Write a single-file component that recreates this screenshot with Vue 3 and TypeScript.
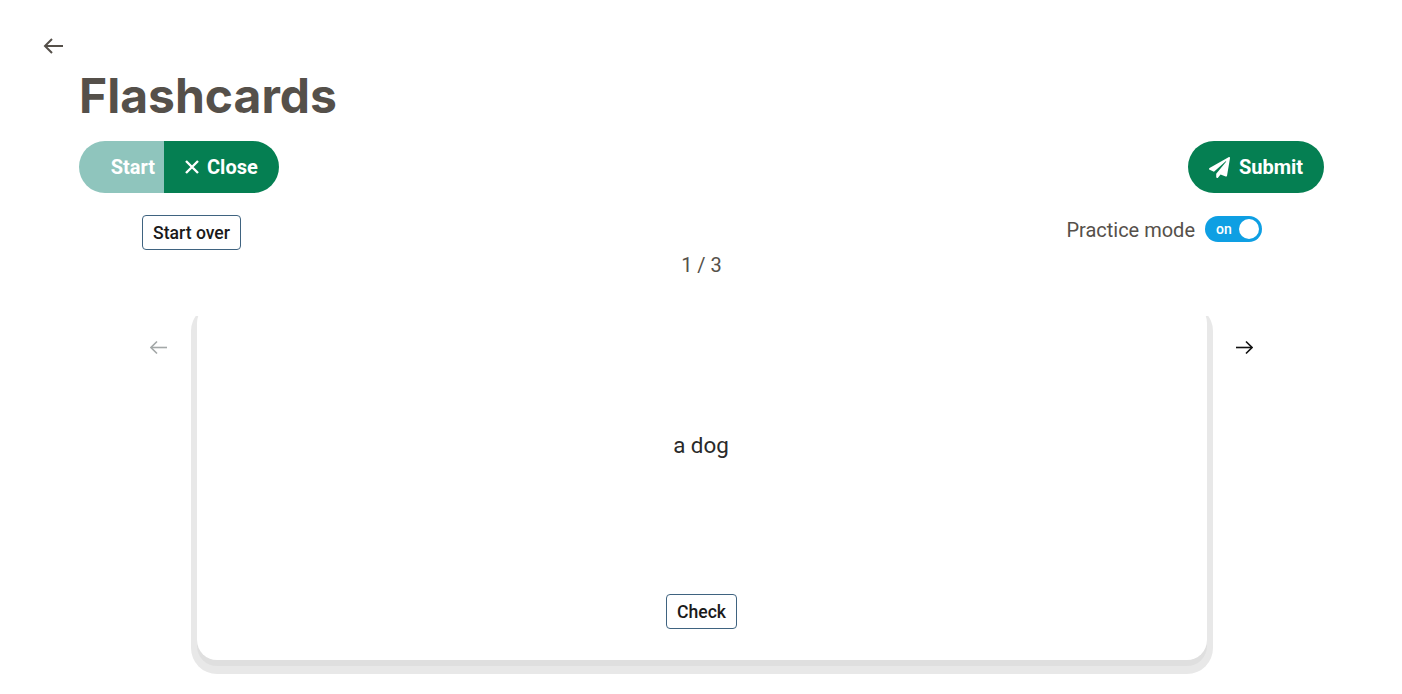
<script setup lang="ts">
import { ref } from 'vue';

interface Flashcard {
  id: number;
  front: string;
}

const cards: Flashcard[] = [
  { id: 1, front: 'a dog' },
  { id: 2, front: 'a cat' },
  { id: 3, front: 'a bird' }
];

const current = ref(0);
const practiceMode = ref(true);
</script>

<template>
  <div class="page">
    <button class="back-btn" title="Back">
      <svg width="20" height="16" viewBox="0 0 20 16" fill="none" stroke="currentColor" stroke-width="2"><path d="M20 8H2"></path><path d="M9 1L2 8l7 7"></path></svg>
    </button>
    <h1 class="title">Flashcards</h1>

    <div class="actions">
      <div class="pill-group">
        <button class="pill start">Start</button>
        <button class="pill close">
          <svg width="14" height="14" viewBox="0 0 14 14" fill="none" stroke="currentColor" stroke-width="2.4"><path d="M1 1l12 12M13 1L1 13"></path></svg>
          Close
        </button>
      </div>
      <button class="pill submit">
        <svg width="21" height="21" viewBox="0 0 512 512" fill="currentColor"><path d="M476 3.2L12.5 270.6c-18.1 10.4-15.8 35.6 2.2 43.2L121 358.4l287.3-253.2c5.5-4.9 13.3 2.6 8.6 8.3L176 407v80.5c0 23.6 28.5 32.9 42.5 15.8L282 426l124.6 52.2c14.2 6 30.4-2.9 33-18.2l72-432C515 7.8 493.3-6.8 476 3.2z"></path></svg>
        Submit
      </button>
    </div>

    <div class="controls">
      <button class="outline-btn">Start over</button>
      <div class="practice">
        <span>Practice mode</span>
        <div class="toggle" :class="{ active: practiceMode }">
          <span class="toggle-label">on</span>
          <span class="knob"></span>
        </div>
      </div>
    </div>

    <div class="counter">{{ current + 1 }} / {{ cards.length }}</div>

    <div class="carousel">
      <button class="nav-btn prev disabled">
        <svg width="18" height="15" viewBox="0 0 18 15" fill="none" stroke="currentColor" stroke-width="1.6"><path d="M17 7.5H1"></path><path d="M7 1.5l-6 6 6 6"></path></svg>
      </button>
      <div class="stage">
        <div class="card">
          <div class="card-text">{{ cards[current].front }}</div>
          <button class="outline-btn check">Check</button>
        </div>
      </div>
      <button class="nav-btn next">
        <svg width="18" height="15" viewBox="0 0 18 15" fill="none" stroke="currentColor" stroke-width="1.6"><path d="M1 7.5h16"></path><path d="M11 1.5l6 6-6 6"></path></svg>
      </button>
    </div>
  </div>
</template>

<style>
html,
body {
  margin: 0;
  background: #fff;
}
</style>

<style scoped>
.page {
  box-sizing: border-box;
  height: 694px;
  overflow: hidden;
  padding: 38px 78px 0 79px;
  font-family: Roboto, "Liberation Sans", sans-serif;
  color: #55504a;
}

button {
  font-family: inherit;
  cursor: pointer;
}

.back-btn {
  display: block;
  height: 16px;
  padding: 0;
  margin: 0 0 0 -36px;
  border: none;
  background: none;
  color: #55504a;
}

.title {
  margin: 13px 0 0;
  height: 58px;
  font-family: Inter, sans-serif;
  font-size: 48px;
  line-height: 58px;
  font-weight: 700;
  color: #55504a;
}

.actions {
  display: flex;
  justify-content: space-between;
  margin-top: 16px;
}

.pill-group {
  display: flex;
}

.pill {
  display: flex;
  align-items: center;
  height: 52px;
  border: none;
  font-size: 20px;
  font-weight: 700;
  color: #fff;
  background: #057f52;
}

.start {
  width: 85px;
  justify-content: flex-end;
  padding: 0 9px 0 0;
  border-radius: 26px 0 0 26px;
  background: #8fc5bd;
}

.close {
  width: 115px;
  padding: 0 0 0 21px;
  gap: 8px;
  border-radius: 0 26px 26px 0;
}

.submit {
  width: 136px;
  justify-content: center;
  gap: 9px;
  border-radius: 26px;
}

.controls {
  display: flex;
  justify-content: space-between;
  margin: 22px 62px 0 63px;
  height: 35px;
}

.outline-btn {
  box-sizing: border-box;
  height: 35px;
  padding: 0 10px;
  border: 1px solid #3f6380;
  border-radius: 4px;
  background: #fff;
  color: #1a1a1a;
  font-size: 17.6px;
  font-weight: 500;
}

.outline-btn.check {
  width: 71px;
  padding: 0;
  margin-right: 1px;
}

.practice {
  display: flex;
  align-items: flex-start;
  gap: 10px;
  font-size: 20px;
  line-height: 30px;
}

.toggle {
  position: relative;
  width: 57px;
  height: 26px;
  margin-top: 1px;
  border-radius: 13px;
  background: #0e9fe3;
}

.toggle-label {
  position: absolute;
  left: 11px;
  top: 0;
  font-size: 14px;
  line-height: 26px;
  font-weight: 500;
  color: #fff;
}

.knob {
  position: absolute;
  right: 3px;
  top: 3px;
  width: 20px;
  height: 20px;
  border-radius: 50%;
  background: #fff;
}

.counter {
  height: 30px;
  text-align: center;
  font-size: 20px;
  line-height: 31px;
}

.carousel {
  display: flex;
  align-items: flex-start;
  margin-top: 36px;
  margin-left: -79px;
  margin-right: -78px;
}

.nav-btn {
  box-sizing: border-box;
  flex: none;
  display: flex;
  height: 15px;
  padding: 0;
  margin-top: 24px;
  border: none;
  background: none;
  color: #111;
}

.nav-btn.prev {
  width: 191px;
  justify-content: flex-end;
  padding-right: 23px;
}

.nav-btn.next {
  width: 189px;
  padding-left: 22px;
}

.nav-btn.disabled {
  color: #a3a8a8;
}

.stage {
  width: 1022px;
  padding: 0 6px 14px;
  box-sizing: border-box;
  overflow: hidden;
}

.card {
  box-sizing: border-box;
  display: flex;
  flex-direction: column;
  align-items: center;
  height: 357px;
  margin-top: -13px;
  padding-bottom: 31px;
  border-radius: 20px;
  background: #fff;
  box-shadow: 0 6px 0 0 #dfdfdf, 0 8px 0 6px #e8e8e8;
}

.card-text {
  flex: 1;
  display: flex;
  align-items: center;
  justify-content: center;
  padding-top: 15px;
  padding-right: 2px;
  padding-bottom: 22px;
  font-size: 22.4px;
  color: #2a2a2a;
}
</style>
